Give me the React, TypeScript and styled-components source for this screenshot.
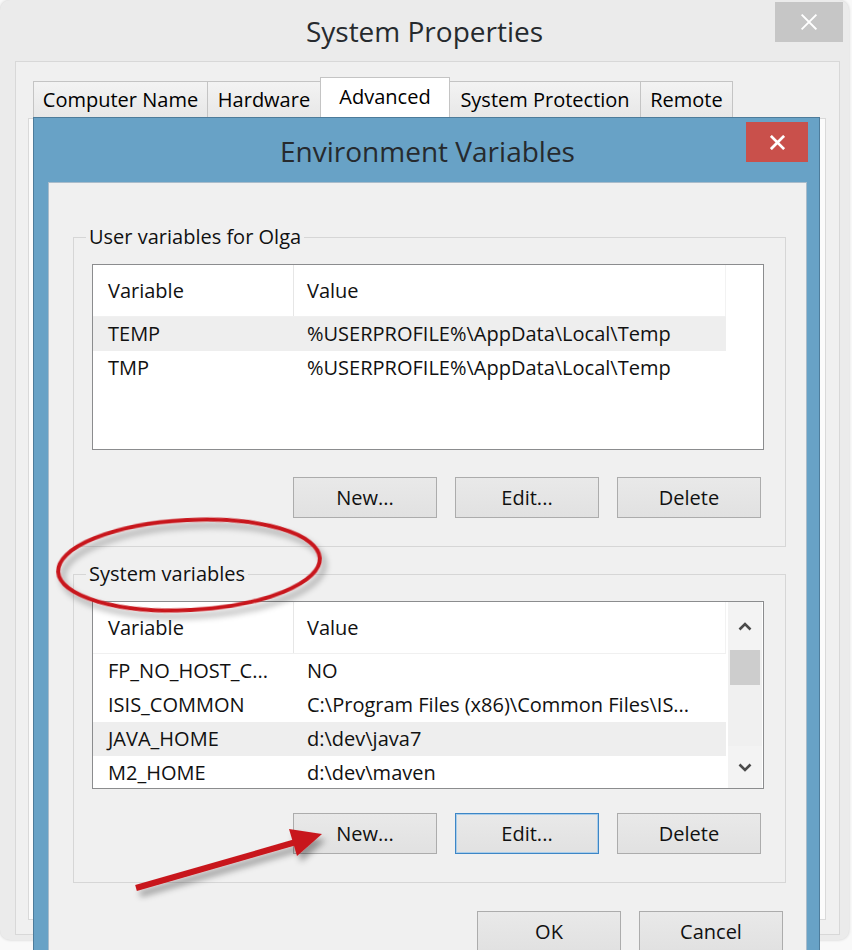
import styled, { createGlobalStyle } from "styled-components";

const GlobalStyle = createGlobalStyle`
  html, body {
    margin: 0;
    padding: 0;
  }
  body {
    width: 852px;
    height: 950px;
    overflow: hidden;
    background: #f9f9f9;
    font-family: "Open Sans", "Noto Sans", sans-serif;
    color: #111;
  }
`;

const Desktop = styled.div`
  position: relative;
  width: 852px;
  height: 950px;
  overflow: hidden;
`;

/* ---------- System Properties (back window) ---------- */

const SysWindow = styled.div`
  width: 849px;
  height: 940px;
  box-sizing: border-box;
  background: #ebebeb;
  border-radius: 10px;
  box-shadow: 0 0 3px rgba(0, 0, 0, 0.18);
  display: flex;
  flex-direction: column;
`;

const TitleBar = styled.div<{ $height: number }>`
  height: ${(p) => p.$height}px;
  flex-shrink: 0;
  display: grid;
  grid-template-columns: 1fr auto 1fr;
`;

const WindowTitle = styled.div<{ $lh: number }>`
  grid-column: 2;
  font-size: 28px;
  line-height: ${(p) => p.$lh}px;
  color: #262a2e;
  white-space: nowrap;
`;

const CloseButton = styled.div<{ $active?: boolean }>`
  grid-column: 3;
  justify-self: end;
  align-self: start;
  display: flex;
  align-items: center;
  justify-content: center;
  width: ${(p) => (p.$active ? 62 : 68)}px;
  height: 40px;
  margin-top: ${(p) => (p.$active ? 4 : 2)}px;
  margin-right: ${(p) => (p.$active ? -1 : 6)}px;
  background: ${(p) => (p.$active ? "#c9504b" : "#c6c6c6")};
`;

const SysClient = styled.div`
  flex: 1;
  margin: 0 9px 5px 15px;
  background: #f0f0f0;
  border: 1px solid #d8d8d8;
  padding: 19px 13px 14px 12px;
  display: flex;
  flex-direction: column;
`;

const TabStrip = styled.div`
  display: flex;
  align-items: flex-end;
  height: 37px;
  margin-left: 5px;
  position: relative;
  z-index: 1;
`;

const Tab = styled.div<{ $w: number; $selected?: boolean }>`
  width: ${(p) => p.$w}px;
  height: ${(p) => (p.$selected ? 42 : 37)}px;
  margin-bottom: ${(p) => (p.$selected ? -1 : 0)}px;
  box-sizing: border-box;
  border: 1px solid #c4c4c4;
  border-bottom: none;
  background: ${(p) =>
    p.$selected ? "#ffffff" : "linear-gradient(#f3f3f3, #e7e7e7)"};
  font-size: 20px;
  line-height: ${(p) => (p.$selected ? 38 : 36)}px;
  text-align: center;
  white-space: nowrap;
  color: #000;
  & + & {
    margin-left: -1px;
  }
`;

const TabPage = styled.div`
  flex: 1;
  background: #fbfbfb;
  border: 1px solid #d9d9d9;
`;

/* ---------- Environment Variables (front window) ---------- */

const EnvWindow = styled.div`
  position: absolute;
  left: 33px;
  top: 117px;
  width: 787px;
  height: 870px;
  box-sizing: border-box;
  background: #68a2c6;
  border: 1px solid #4d7c9b;
  padding: 0 12px 0 14px;
  display: flex;
  flex-direction: column;
  z-index: 2;
`;

const EnvClient = styled.div`
  flex: 1;
  background: #f0f0f0;
  border: 1px solid #a9bccb;
  padding: 40px 20px 0 24px;
  display: flex;
  flex-direction: column;
`;

const GroupBox = styled.fieldset<{ $gap?: number }>`
  margin: ${(p) => p.$gap ?? 0}px 0 0 0;
  padding: 0 21px 28px 18px;
  border: 1px solid #d6d6d6;
  min-width: 0;
`;

const GroupLabel = styled.legend`
  margin-left: -6px;
  padding: 0 3px;
  font-size: 20px;
  line-height: 28px;
  color: #111;
`;

const ListBox = styled.div<{ $h: number }>`
  height: ${(p) => p.$h}px;
  margin-top: 13px;
  box-sizing: border-box;
  border: 1px solid #8b8c8e;
  background: #fff;
  display: flex;
  overflow: hidden;
`;

const Columns = styled.div`
  width: 633px;
  flex-shrink: 0;
`;

const HeaderRow = styled.div`
  display: grid;
  grid-template-columns: 200px 433px;
  height: 52px;
  border-bottom: 1px solid #f0f0f0;
  box-sizing: border-box;
`;

const HeaderCell = styled.div<{ $divider?: boolean }>`
  font-size: 20px;
  line-height: 51px;
  padding-left: ${(p) => (p.$divider ? 13 : 15)}px;
  border-left: ${(p) => (p.$divider ? "1px solid #e6e6e6" : "none")};
  border-right: ${(p) => (p.$divider ? "1px solid #f2f2f2" : "none")};
  white-space: nowrap;
`;

const Row = styled.div<{ $hl?: boolean }>`
  display: grid;
  grid-template-columns: 200px 433px;
  height: 34px;
  background: ${(p) => (p.$hl ? "#eeeeee" : "transparent")};
`;

const Cell = styled.div<{ $value?: boolean }>`
  font-size: 20px;
  line-height: 34px;
  padding-left: ${(p) => (p.$value ? 14 : 15)}px;
  white-space: nowrap;
  overflow: hidden;
  color: #111;
`;

const ScrollBar = styled.div`
  width: 34px;
  margin-left: auto;
  margin-right: 1px;
  background: #f0f0f0;
  display: flex;
  flex-direction: column;
`;

const ScrollArrow = styled.div<{ $h: number }>`
  height: ${(p) => p.$h}px;
  display: flex;
  align-items: center;
  justify-content: center;
  background: #f3f3f3;
`;

const Thumb = styled.div`
  height: 35px;
  background: #cdcdcd;
  margin: 0 2px;
`;

const Track = styled.div`
  flex: 1;
`;

const ButtonRow = styled.div<{ $gap: number; $right: number }>`
  display: flex;
  justify-content: flex-end;
  gap: 18px;
  margin-top: ${(p) => p.$gap}px;
  margin-right: ${(p) => p.$right}px;
`;

const Button = styled.div<{ $focused?: boolean }>`
  width: 144px;
  height: 41px;
  box-sizing: border-box;
  border: 1px solid ${(p) => (p.$focused ? "#3d86c6" : "#acacac")};
  box-shadow: ${(p) => (p.$focused ? "inset 0 0 0 1px #a9cdea" : "none")};
  background: linear-gradient(#e9e9e9, #e1e1e1);
  font-size: 20px;
  line-height: 39px;
  text-align: center;
  color: #111;
`;

const Annotations = styled.svg`
  position: absolute;
  left: 0;
  top: 0;
  z-index: 5;
  pointer-events: none;
`;

type Entry = { name: string; value: string; hl?: boolean };

const userVars: Entry[] = [
  { name: "TEMP", value: "%USERPROFILE%\\AppData\\Local\\Temp", hl: true },
  { name: "TMP", value: "%USERPROFILE%\\AppData\\Local\\Temp" },
];

const systemVars: Entry[] = [
  { name: "FP_NO_HOST_C...", value: "NO" },
  { name: "ISIS_COMMON", value: "C:\\Program Files (x86)\\Common Files\\IS..." },
  { name: "JAVA_HOME", value: "d:\\dev\\java7", hl: true },
  { name: "M2_HOME", value: "d:\\dev\\maven" },
];

const tabs = [
  { label: "Computer Name", w: 175 },
  { label: "Hardware", w: 114 },
  { label: "Advanced", w: 130, selected: true },
  { label: "System Protection", w: 192 },
  { label: "Remote", w: 93 },
];

function CloseX({ size, width }: { size: number; width: number }) {
  return (
    <svg width={size} height={size} viewBox="0 0 16 16">
      <path
        d="M2 2 L14 14 M14 2 L2 14"
        stroke="#fff"
        strokeWidth={width}
        strokeLinecap="square"
      />
    </svg>
  );
}

function Chevron({ up }: { up?: boolean }) {
  return (
    <svg width="14" height="9" viewBox="0 0 14 9">
      <path
        d={up ? "M1.5 7.5 L7 2 L12.5 7.5" : "M1.5 1.5 L7 7 L12.5 1.5"}
        fill="none"
        stroke="#4a4a4a"
        strokeWidth="2.6"
      />
    </svg>
  );
}

function VarList({
  rows,
  height,
  scroll,
}: {
  rows: Entry[];
  height: number;
  scroll?: boolean;
}) {
  return (
    <ListBox $h={height}>
      <Columns>
        <HeaderRow>
          <HeaderCell>Variable</HeaderCell>
          <HeaderCell $divider>Value</HeaderCell>
        </HeaderRow>
        {rows.map((r) => (
          <Row key={r.name} $hl={r.hl}>
            <Cell>{r.name}</Cell>
            <Cell $value>{r.value}</Cell>
          </Row>
        ))}
      </Columns>
      {scroll && (
        <ScrollBar>
          <ScrollArrow $h={48}>
            <Chevron up />
          </ScrollArrow>
          <Thumb />
          <Track />
          <ScrollArrow $h={42}>
            <Chevron />
          </ScrollArrow>
        </ScrollBar>
      )}
    </ListBox>
  );
}

export default function App() {
  return (
    <Desktop>
      <GlobalStyle />
      <SysWindow>
        <TitleBar $height={61}>
          <WindowTitle $lh={62}>System Properties</WindowTitle>
          <CloseButton>
            <CloseX size={18} width={1.6} />
          </CloseButton>
        </TitleBar>
        <SysClient>
          <TabStrip>
            {tabs.map((t) => (
              <Tab key={t.label} $w={t.w} $selected={t.selected}>
                {t.label}
              </Tab>
            ))}
          </TabStrip>
          <TabPage />
        </SysClient>
      </SysWindow>

      <EnvWindow>
        <TitleBar $height={64}>
          <WindowTitle $lh={66}>Environment Variables</WindowTitle>
          <CloseButton $active>
            <CloseX size={15} width={3} />
          </CloseButton>
        </TitleBar>
        <EnvClient>
          <GroupBox>
            <GroupLabel>User variables for Olga</GroupLabel>
            <VarList rows={userVars} height={186} />
            <ButtonRow $gap={27} $right={3}>
              <Button>New...</Button>
              <Button>Edit...</Button>
              <Button>Delete</Button>
            </ButtonRow>
          </GroupBox>
          <GroupBox $gap={13}>
            <GroupLabel>System variables</GroupLabel>
            <VarList rows={systemVars} height={188} scroll />
            <ButtonRow $gap={24} $right={3}>
              <Button>New...</Button>
              <Button $focused>Edit...</Button>
              <Button>Delete</Button>
            </ButtonRow>
          </GroupBox>
          <ButtonRow $gap={28} $right={3}>
            <Button>OK</Button>
            <Button>Cancel</Button>
          </ButtonRow>
        </EnvClient>
      </EnvWindow>

      <Annotations width="852" height="950" viewBox="0 0 852 950">
        <defs>
          <filter id="shade" x="-20%" y="-20%" width="140%" height="160%">
            <feDropShadow
              dx="4"
              dy="6"
              stdDeviation="3"
              floodColor="#000"
              floodOpacity="0.35"
            />
          </filter>
        </defs>
        <ellipse
          cx="189"
          cy="565"
          rx="131"
          ry="45"
          transform="rotate(-3 189 565)"
          fill="none"
          stroke="#c8161d"
          strokeWidth="4"
          filter="url(#shade)"
        />
        <g filter="url(#shade)">
          <line
            x1="136"
            y1="888"
            x2="296"
            y2="842"
            stroke="#c8161d"
            strokeWidth="6"
          />
          <polygon points="322,834 289,829 297,856" fill="#c8161d" />
        </g>
      </Annotations>
    </Desktop>
  );
}
